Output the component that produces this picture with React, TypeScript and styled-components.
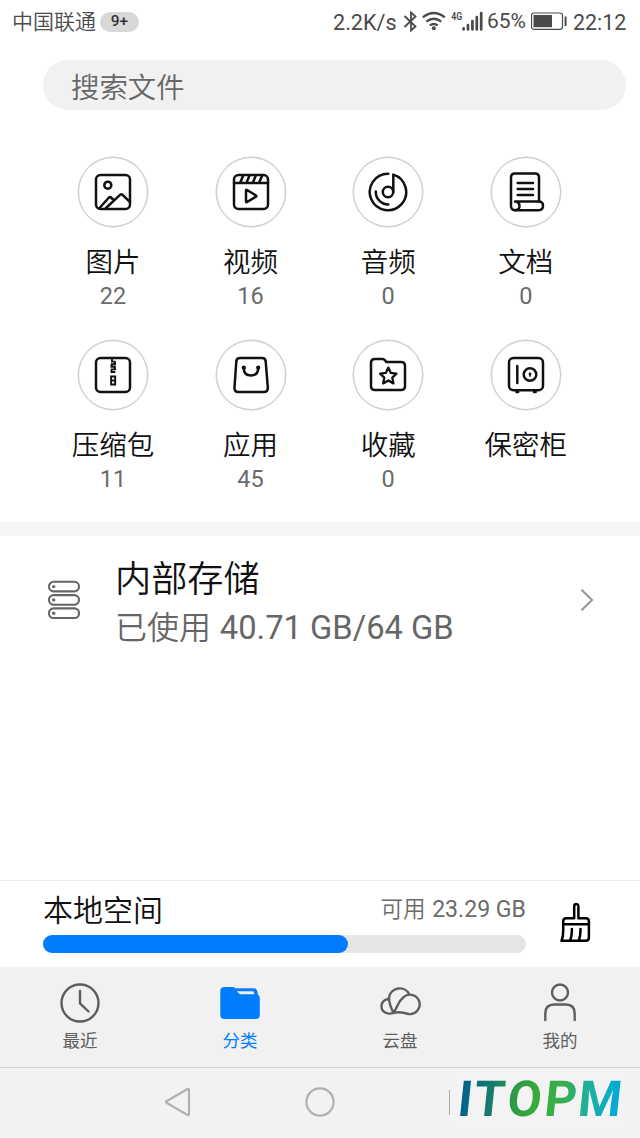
import React from 'react';
import styled, { createGlobalStyle } from 'styled-components';

const GlobalStyle = createGlobalStyle`
  * { box-sizing: border-box; }
  body {
    margin: 0;
    background: #fff;
    font-family: Roboto, "Noto Sans CJK SC", sans-serif;
    font-weight: 350;
  }
  svg { display: block; flex: none; }
`;

const Screen = styled.div`
  width: 640px;
  height: 1138px;
  display: flex;
  flex-direction: column;
  background: #fff;
  overflow: hidden;
`;

const StatusBar = styled.header`
  height: 60px;
  flex: none;
  display: flex;
  align-items: flex-start;
  padding: 10px 14px 0 12px;
  color: #4a4a4a;
  font-size: 21px;
  line-height: 24px;
`;

const Carrier = styled.span`
  width: 88px;
  white-space: nowrap;
`;

const CountBadge = styled.span`
  width: 39px;
  height: 20px;
  margin-top: 2px;
  border-radius: 10px;
  background: #d8d8d8;
  color: #333;
  font-size: 15.5px;
  font-weight: 500;
  line-height: 19px;
  text-align: center;
`;

const StatusText = styled.span<{ $w: number; $size?: number; $down?: number }>`
  width: ${p => p.$w}px;
  font-size: ${p => p.$size ?? 21.4}px;
  font-weight: 400;
  margin-top: ${p => p.$down ?? 0}px;
  white-space: nowrap;
`;

const StatusRight = styled.div`
  margin-left: auto;
  width: 293px;
  display: flex;
`;

const SearchBox = styled.div`
  flex: none;
  height: 50px;
  margin: 0 14px 0 43px;
  padding-left: 28px;
  border-radius: 25px;
  background: #f1f1f1;
  color: #666;
  font-size: 28.4px;
  line-height: 57px;
`;

const Categories = styled.section`
  flex: none;
  height: 412px;
  padding: 47px 45.4px 0 44.1px;
  display: grid;
  grid-template-columns: repeat(4, 1fr);
  grid-auto-rows: 182.6px;
`;

const Category = styled.div`
  display: flex;
  flex-direction: column;
  align-items: center;
`;

const IconRing = styled.div`
  width: 70px;
  height: 70px;
  border: 1px solid #c9c9c9;
  box-shadow: 0 0 0 0.5px #c9c9c9;
  border-radius: 50%;
  display: flex;
  align-items: center;
  justify-content: center;
`;

const CategoryName = styled.div`
  margin-top: 16px;
  height: 39px;
  line-height: 40px;
  font-size: 27.5px;
  color: #111;
`;

const CategoryCount = styled.div`
  height: 28px;
  line-height: 28px;
  font-size: 23.5px;
  font-weight: 400;
  color: #6b6b6b;
`;

const Divider = styled.div`
  flex: none;
  height: 14px;
  background: #f6f6f6;
`;

const StorageRow = styled.section`
  flex: none;
  height: 128px;
  display: flex;
  align-items: center;
  padding: 0 46px 0 47px;
`;

const StorageText = styled.div`
  flex: 1;
  margin-left: 34px;
  padding-top: 7px;
`;

const StorageTitle = styled.div`
  font-size: 36.2px;
  line-height: 50px;
  color: #111;
`;

const StorageUsage = styled.div`
  font-size: 32px;
  line-height: 46px;
  margin-bottom: 2px;
  color: #666;
`;

const UsageNumber = styled.span<{ $size: number }>`
  margin-left: 1px;
  font-size: ${p => p.$size}px;
  font-weight: 400;
`;

const Spacer = styled.div`
  flex: 1;
`;

const LocalSpace = styled.section`
  flex: none;
  height: 87px;
  border-top: 1px solid #ececec;
  padding: 0 48px 0 43px;
  display: flex;
`;

const SpaceInfo = styled.div`
  width: 483px;
`;

const SpaceHead = styled.div`
  display: flex;
  justify-content: space-between;
  height: 54px;
  line-height: 57px;
`;

const SpaceTitle = styled.span`
  font-size: 30px;
  line-height: 59px;
  color: #111;
`;

const SpaceFree = styled.span`
  font-size: 22.6px;
  color: #6b6b6b;
`;

const Track = styled.div`
  height: 18px;
  border-radius: 9px;
  background: #e5e5e5;
`;

const Fill = styled.div`
  width: 305px;
  height: 18px;
  border-radius: 9px;
  background: #007dff;
`;

const CleanButton = styled.div`
  margin: 21px 0 0 33px;
`;

const TabBar = styled.nav`
  flex: none;
  height: 100px;
  background: #f1f1f1;
  display: grid;
  grid-template-columns: repeat(4, 1fr);
`;

const Tab = styled.div<{ $active?: boolean }>`
  display: flex;
  flex-direction: column;
  align-items: center;
  padding-top: 14px;
  color: ${p => (p.$active ? '#007dff' : '#5e5e5e')};
`;

const TabLabel = styled.span`
  margin-top: 2px;
  font-size: 17.5px;
  font-weight: 400;
  line-height: 28px;
`;

const NavBar = styled.footer`
  position: relative;
  flex: none;
  height: 71px;
  border-top: 1px solid #d6d6d6;
  background: #f2f2f2;
  display: flex;
  align-items: center;
  padding: 0 0 2px 164px;
`;

const HomeIcon = styled.svg`
  margin-left: 113px;
`;

const Watermark = styled.div`
  position: absolute;
  left: 449px;
  top: 1px;
  width: 181px;
  height: 60px;
  background: #f3f3f3;
`;

const Line = ({ children, width = 2.5 }: { children: React.ReactNode; width?: number }) => (
  <svg width="44" height="44" viewBox="0 0 44 44" fill="none" stroke="#111" strokeWidth={width} strokeLinecap="round" strokeLinejoin="round">
    {children}
  </svg>
);

const PictureIcon = () => (
  <Line>
    <rect x="5" y="5" width="34" height="34" rx="4.5" />
    <circle cx="16.8" cy="15.2" r="3.5" />
    <path d="M8.5 38 18 27.5q1-1 2 0l2.5 2.5M15 38 29.3 24.7q1-.9 2 0L39 32" />
  </Line>
);

const VideoIcon = () => (
  <Line>
    <rect x="5" y="5" width="34" height="34" rx="4.5" />
    <path d="M5 13h34M14 6l-2.5 6M20.3 6l-2.5 6M26.6 6l-2.5 6M32.9 6l-2.5 6" />
    <path d="M17 20.5v11q0 1 1 .5l9-5.3q.8-.6 0-1.2L18 20q-1-.5-1 .5z" />
  </Line>
);

const AudioIcon = () => (
  <Line>
    <path d="M22.3 3.8A18.2 18.2 0 1 0 27.3 4.6V22" />
    <circle cx="22" cy="22" r="5.2" />
    <path d="M9.8 21.5A12.5 12.5 0 0 0 22.3 34.5" />
  </Line>
);

const DocumentIcon = () => (
  <Line>
    <path d="M11 40.2Q7 40.2 7 36V7.5Q7 3.5 11 3.5H31Q35 3.5 35 7.5V31.5" />
    <path d="M13.7 13H29M13.7 19H29M13.7 25H29" />
    <path d="M11 40.2H34.7Q39 40.2 39 35.8 39 31.5 34.7 31.5H11M11 31.5q4.5.4 4.5 4.4T11 40" />
  </Line>
);

const ArchiveIcon = () => (
  <Line>
    <rect x="5" y="5" width="34" height="34" rx="4.5" />
    <path strokeWidth="1.9" strokeLinecap="butt" strokeLinejoin="miter" d="M21 6v2.6h3.6M24 8.6v2.6h-4.2M20.5 11.2v2.6h4.2M24 13.8v2.6h-4.2M20.5 16.4V19h3.8" />
    <path strokeWidth="1.9" strokeLinejoin="miter" d="M20.1 23.5h4.1v8h-4.1zM20.1 27.5h4.1" />
  </Line>
);

const AppIcon = () => (
  <Line>
    <path d="M11 5H33Q36.3 5 36.7 8.3L38.8 34.5Q39 39 35 39H9.3Q5.2 39 5.5 34.5L7.3 8.3Q7.7 5 11 5z" />
    <path d="M14.8 15q0 7.5 7.2 7.5T29.2 15" />
    <circle cx="14.8" cy="14.7" r="0.9" />
    <circle cx="29.2" cy="14.7" r="0.9" />
  </Line>
);

const FavoriteIcon = () => (
  <Line>
    <path d="M9 6H16.6Q18 6 19 7.2L20.3 9H35Q39 9 39 13V33Q39 37 35 37H9Q5 37 5 33V10Q5 6 9 6z" />
    <path strokeWidth="2.3" d="m22.3 14.6 2.5 5.3 5.7.7-4.2 4 1.1 5.8-5.1-2.9-5.1 2.9 1.1-5.8-4.2-4 5.7-.7z" />
  </Line>
);

const SafeIcon = () => (
  <Line>
    <rect x="5" y="5" width="34" height="32.3" rx="4.5" />
    <path d="M13.3 13V30M12.5 39h1.7M30 39h1.7" />
    <circle cx="26" cy="21.5" r="6.3" />
    <circle cx="26" cy="21" r=".6" strokeWidth="1.6" />
    <path strokeWidth="1.5" d="M26 21v2.2" />
  </Line>
);

const categories = [
  { name: '图片', count: '22', icon: <PictureIcon /> },
  { name: '视频', count: '16', icon: <VideoIcon /> },
  { name: '音频', count: '0', icon: <AudioIcon /> },
  { name: '文档', count: '0', icon: <DocumentIcon /> },
  { name: '压缩包', count: '11', icon: <ArchiveIcon /> },
  { name: '应用', count: '45', icon: <AppIcon /> },
  { name: '收藏', count: '0', icon: <FavoriteIcon /> },
  { name: '保密柜', count: '', icon: <SafeIcon /> },
];

const TabSvg = ({ children }: { children: React.ReactNode }) => (
  <svg width="44" height="44" viewBox="0 0 44 44" fill="none" stroke="currentColor" strokeWidth="2.4" strokeLinecap="round" strokeLinejoin="round">
    {children}
  </svg>
);

const tabs = [
  {
    label: '最近',
    icon: (
      <TabSvg>
        <circle cx="22" cy="22" r="18.5" />
        <path d="M22 10V22.3L30.5 30.5" />
      </TabSvg>
    ),
  },
  {
    label: '分类',
    active: true,
    icon: (
      <TabSvg>
        <path stroke="none" fill="currentColor" fillRule="evenodd" d="M6.5 6H14.5Q16 6 17.2 7.3H35.5Q39 7.3 39.6 11.5L39.8 13.5Q41.8 14.5 41.8 17V34Q41.8 38 37.8 38H6.5Q2.3 38 2.3 34V10Q2.3 6 6.5 6zM18.8 10.3 20.7 12.3Q21.5 13.2 23 13.2H36.3Q36.3 10.3 34.5 10.3z" />
      </TabSvg>
    ),
  },
  {
    label: '云盘',
    icon: (
      <TabSvg>
        <path d="M10.7 18A7.3 7.3 0 0 0 10.7 32.6Q13 32.8 15.8 31.9 22 30.2 30.5 33A9.7 9.7 0 1 0 25.5 16.2Q22 19 19.5 24.5 17.8 28.5 15.3 31.5 11 23 11 16.5A10.8 10.8 0 0 1 31.3 13.3" />
      </TabSvg>
    ),
  },
  {
    label: '我的',
    icon: (
      <TabSvg>
        <circle cx="22" cy="11.5" r="8" />
        <path d="M7.3 39V32.5Q7.3 23.5 16.3 23.5H27.7Q36.7 23.5 36.7 32.5V39" />
      </TabSvg>
    ),
  },
];

export default function App() {
  return (
    <Screen lang="zh-CN">
      <GlobalStyle />
      <StatusBar>
        <Carrier>中国联通</Carrier>
        <CountBadge>9+</CountBadge>
        <StatusRight>
          <StatusText $w={69} $size={21.6} $down={1}>2.2K/s</StatusText>
          <svg width="85" height="24" viewBox="402 10 85 24" fill="none" stroke="#4a4a4a" strokeWidth="1.8">
            <path d="M404.5 16 415.5 26.5 411 30.5V12.5L415.5 16.5 404.5 27" />
            <g strokeWidth="2.3">
              <path d="M422.8 17.3Q433.8 8.6 444.8 17.3M426.3 21.6Q433.8 15.8 441.3 21.6M429.8 25.4Q433.8 22.6 437.8 25.4" />
            </g>
            <circle cx="433.8" cy="28.3" r="2" fill="#4a4a4a" stroke="none" />
            <g strokeWidth="2.7" strokeLinecap="round">
              <path d="M463.6 28.3V29.5M468 25V29.5M472.4 21V29.5M476.8 17V29.5M481.2 13V29.5" />
            </g>
            <text x="451.3" y="20" fontSize="11" fontWeight="600" fontFamily="Roboto" fill="#4a4a4a" stroke="none" textLength="11" lengthAdjust="spacingAndGlyphs">4G</text>
          </svg>
          <StatusText $w={44} $size={21} $down={-1}>65%</StatusText>
          <svg width="42" height="24" viewBox="531 10 42 24" fill="none" stroke="#4a4a4a">
            <rect x="531.5" y="13" width="31" height="16.3" rx="2.5" strokeWidth="1.2" />
            <path d="M533.5 15H552V27.2H533.5z" fill="#4a4a4a" stroke="none" />
            <path strokeWidth="2" d="M565.6 16.5V26" />
          </svg>
          <StatusText $w={53} $down={1}>22:12</StatusText>
        </StatusRight>
      </StatusBar>
      <SearchBox>搜索文件</SearchBox>
      <Categories>
        {categories.map(c => (
          <Category key={c.name}>
            <IconRing>{c.icon}</IconRing>
            <CategoryName>{c.name}</CategoryName>
            <CategoryCount>{c.count}</CategoryCount>
          </Category>
        ))}
      </Categories>
      <Divider />
      <StorageRow>
        <svg width="34" height="40" viewBox="0 0 34 40" fill="none" stroke="#666" strokeWidth="2.1">
          {[1.8, 15.1, 28.4].map(y => (
            <g key={y}>
              <rect x="2" y={y} width="30" height="9.6" rx="4.6" />
              <circle cx="6.7" cy={y + 4.8} r="1.7" fill="#666" stroke="none" />
            </g>
          ))}
        </svg>
        <StorageText>
          <StorageTitle>内部存储</StorageTitle>
          <StorageUsage>已使用 <UsageNumber $size={32.7}>40.71 GB/64 GB</UsageNumber></StorageUsage>
        </StorageText>
        <svg width="14" height="24" viewBox="0 0 14 24" fill="none" stroke="#979797" strokeWidth="2">
          <path d="M1.5 1.7 12 12 1.5 22.3" />
        </svg>
      </StorageRow>
      <Spacer />
      <LocalSpace>
        <SpaceInfo>
          <SpaceHead>
            <SpaceTitle>本地空间</SpaceTitle>
            <SpaceFree>可用 <UsageNumber $size={23.1}>23.29 GB</UsageNumber></SpaceFree>
          </SpaceHead>
          <Track><Fill /></Track>
        </SpaceInfo>
        <CleanButton>
          <svg width="33" height="42" viewBox="559 902 33 42" fill="none" stroke="#000" strokeWidth="2.5" strokeLinejoin="round" strokeLinecap="round">
            <path d="M574.2 918.3V906.5Q574.2 904 576.2 904T578.4 906.5V918.3H585.7Q588.9 918.3 588.9 921.5V937.5Q588.9 940.8 585.7 940.8H561.5Q563.2 937 563.2 931V921.5Q563.2 918.3 566.4 918.3zM563.2 924.3H588.9M571.9 929Q571.9 936 570.2 940M580.5 929Q580.5 936 579 940" />
          </svg>
        </CleanButton>
      </LocalSpace>
      <TabBar>
        {tabs.map(t => (
          <Tab key={t.label} $active={t.active}>
            {t.icon}
            <TabLabel>{t.label}</TabLabel>
          </Tab>
        ))}
      </TabBar>
      <NavBar>
        <svg width="28" height="32" viewBox="0 0 28 32" fill="none" stroke="#b1b1b1" strokeWidth="2.2" strokeLinejoin="round">
          <path d="M2.5 15.2Q1.4 16 2.5 16.8L23.5 29Q25 29.6 25 28.2V3.8Q25 2.4 23.5 3z" />
        </svg>
        <HomeIcon width="30" height="30" viewBox="0 0 30 30" fill="none" stroke="#b1b1b1" strokeWidth="2.2">
          <circle cx="15" cy="15" r="13.6" />
        </HomeIcon>
        <Watermark>
          <svg width="181" height="60" viewBox="449 1069 181 60">
            <defs>
              <linearGradient id="brand" gradientUnits="userSpaceOnUse" x1="458" y1="0" x2="618" y2="0">
                <stop offset="0" stopColor="#005f8d" />
                <stop offset=".06" stopColor="#046b89" />
                <stop offset=".2" stopColor="#197b6c" />
                <stop offset=".34" stopColor="#2d9a45" />
                <stop offset=".5" stopColor="#3bad3a" />
                <stop offset=".66" stopColor="#35af55" />
                <stop offset=".8" stopColor="#1eb09e" />
                <stop offset="1" stopColor="#00a9dc" />
              </linearGradient>
            </defs>
            <path d="M449.5 1090V1115" stroke="#aaa" />
            <g transform="translate(0 1115.5) skewX(-6)">
              <text x="456.5 472.6 506 543.2 576.8" y="0" fontFamily="Roboto" fontWeight="700" fontSize="49.5" fill="url(#brand)">ITOPM</text>
            </g>
          </svg>
        </Watermark>
      </NavBar>
    </Screen>
  );
}
